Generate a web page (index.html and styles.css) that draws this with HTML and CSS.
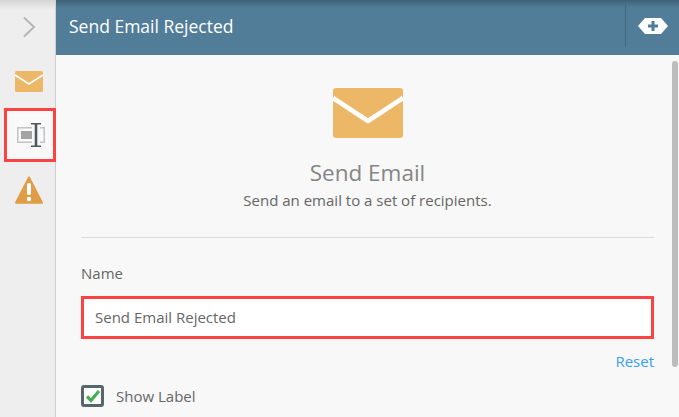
FILE: index.html
```html
<!DOCTYPE html>
<html lang="en">
<head>
<meta charset="utf-8">
<title>Send Email Rejected</title>
<link rel="stylesheet" href="styles.css">
</head>
<body>
<div class="app">
  <nav class="side">
    <div class="side-item">
      <svg width="14" height="22" viewBox="0 0 14 22"><path d="M2 1.500 L12 11 L2 20.500" fill="none" stroke="#b5b5b5" stroke-width="2"/></svg>
    </div>
    <div class="side-item">
      <svg width="28" height="21" viewBox="0 0 28 21"><rect width="28" height="21" rx="1.500" fill="#ecb868"/><path d="M0 4 L14 13 L28 4" fill="none" stroke="#fff" stroke-width="1.800"/></svg>
    </div>
    <div class="side-item selected">
      <svg width="28" height="26" viewBox="0 0 28 26"><path d="M15 5.750 H0.750 V20.250 H15 M23 5.750 H27.250 V20.250 H23" fill="none" stroke="#c4c4c4" stroke-width="1.500"/><rect x="4" y="9" width="11" height="8" fill="#a3a3a3"/><path d="M14 1.800 H24 M14 24.200 H24" fill="none" stroke="#4c5a5e" stroke-width="1.600"/><path d="M19 1 V25" fill="none" stroke="#4c5a5e" stroke-width="2.600"/></svg>
    </div>
    <div class="side-item warn">
      <svg width="28" height="28" viewBox="0 0 28 28"><path d="M14 1.500 L27 26.800 H1 Z" fill="#e19c46" stroke="#e19c46" stroke-width="2" stroke-linejoin="round"/><rect x="12" y="7" width="4" height="12" rx="1.800" fill="#fff"/><circle cx="14" cy="23" r="2.200" fill="#fff"/></svg>
    </div>
  </nav>
  <main class="main">
    <header class="head">
      <h1 class="title">Send Email Rejected</h1>
      <div class="head-action">
        <svg width="30" height="16" viewBox="0 0 30 16"><path d="M7 0 H23 L30 8 L23 16 H7 L0 8 Z" fill="#fff"/><path d="M15 3 V13 M10 8 H20" stroke="#527d99" stroke-width="3"/></svg>
      </div>
    </header>
    <div class="body">
      <div class="content">
        <div class="hero">
          <svg class="hero-icon" width="70" height="50" viewBox="0 0 70 50"><rect width="70" height="50" rx="3" fill="#ecb868"/><path d="M0 10 L35 33 L70 10" fill="none" stroke="#fff" stroke-width="4.500" stroke-linejoin="round"/></svg>
          <h2 class="hero-title">Send Email</h2>
          <p class="hero-sub">Send an email to a set of recipients.</p>
        </div>
        <div class="field">
          <label class="field-label">Name</label>
          <div class="input">Send Email Rejected</div>
          <div class="reset-row"><a class="reset">Reset</a></div>
        </div>
        <div class="check-row">
          <span class="check">
            <svg width="16" height="14" viewBox="0 0 16 14"><path d="M2 7.500 L6 11.500 L14 2" fill="none" stroke="#48ad4e" stroke-width="3.200"/></svg>
          </span>
          <span class="check-label">Show Label</span>
        </div>
      </div>
      <div class="scroll"></div>
    </div>
  </main>
</div>
</body>
</html>
```
FILE: styles.css
```css
* { box-sizing: border-box; }
html, body { margin: 0; height: 100%; overflow: hidden; }
body { font-family: "Open Sans", sans-serif; color: #666; background: #f8f8f8; }
.app { display: flex; height: 417px; width: 679px; }
.side {
  width: 56px;
  flex: none;
  background: linear-gradient(#d4d4d4 0, #eeeeee 10px);
  border-right: 1px solid #cfcfcf;
  padding-left: 4px;
  display: flex;
  flex-direction: column;
}
.side-item {
  height: 54px;
  margin-right: -1px;
  display: flex;
  align-items: center;
  justify-content: center;
  padding-right: 3px;
}
.side-item.selected { background: #f9f9f9; border: 3px solid #fb4343; padding: 0 0 0 2px; }
.side-item.warn { height: 56px; }
.main { flex: 1; min-width: 0; display: flex; flex-direction: column; }
.head {
  height: 55px;
  flex: none;
  background: linear-gradient(#3f6278 0, #527d99 8px);
  display: flex;
  align-items: center;
  justify-content: space-between;
  padding-left: 13px;
}
.title { margin: 0; font-size: 17.500px; font-weight: 400; color: #fff; position: relative; top: -2px; }
.head-action {
  width: 54px;
  height: 42px;
  border-left: 1px solid #3f6a85;
  display: flex;
  align-items: center;
  justify-content: center;
  margin-top: -3px;
}
.body { flex: 1; display: flex; min-height: 0; }
.content { width: 623px; flex: none; padding: 33px 25px 0; margin-right: -6px; }
.hero {
  display: flex;
  flex-direction: column;
  align-items: center;
  height: 150px;
  border-bottom: 1px solid #dcdcdc;
}
.hero-icon { display: block; }
.hero-title { margin: 17px 0 0; font-size: 22.500px; line-height: 36px; font-weight: 400; color: #858585; }
.hero-sub { margin: 0; font-size: 15px; line-height: 19px; color: #666; }
.field { padding-top: 25px; }
.field-label { display: block; font-size: 15px; line-height: 20px; color: #666; }
.input {
  margin-top: 13px;
  height: 43px;
  background: #fff;
  border: 3px solid #fb4343;
  padding-left: 11px;
  font-size: 15px;
  line-height: 36px;
  color: #666;
}
.reset-row { display: flex; justify-content: flex-end; margin-top: 12px; }
.reset { font-size: 15px; line-height: 20px; color: #3aa0f5; }
.check-row { display: flex; align-items: center; gap: 12px; margin-top: 14px; }
.check {
  width: 23px;
  height: 22px;
  border: 3px solid #56666b;
  border-radius: 3px;
  background: #fff;
  display: flex;
  align-items: center;
  justify-content: center;
}
.check-label { font-size: 15px; color: #666; }
.scroll { width: 6px; height: 306px; margin: 6px 0 0 auto; background: #bcbcbc; border-radius: 3px; position: relative; left: -1px; }
```
